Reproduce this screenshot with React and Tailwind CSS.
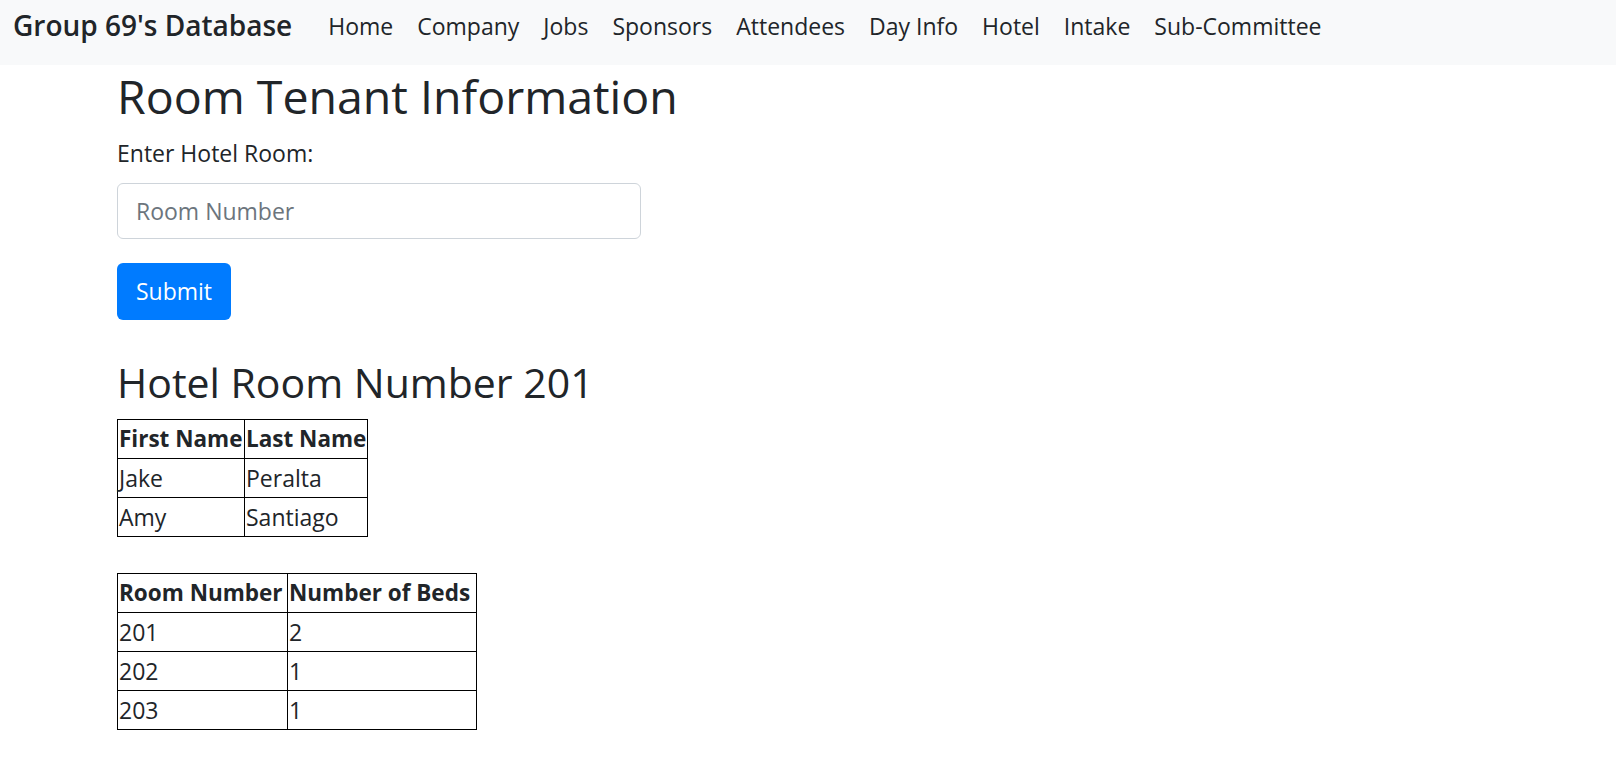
import React, { useState } from "react";

const links = [
  "Home",
  "Company",
  "Jobs",
  "Sponsors",
  "Attendees",
  "Day Info",
  "Hotel",
  "Intake",
  "Sub-Committee",
];

const tenants = [
  { first: "Jake", last: "Peralta" },
  { first: "Amy", last: "Santiago" },
];

const rooms = [
  { number: "201", beds: "2" },
  { number: "202", beds: "1" },
  { number: "203", beds: "1" },
];

const App = () => {
  const [room, setRoom] = useState("");

  const cell = "border border-black p-[1px] text-left align-top whitespace-nowrap";
  const head = cell + " font-bold text-[22.5px]";

  return (
    <div
      className="min-h-screen bg-white text-[#212529]"
      style={{ fontFamily: '"Open Sans", "Noto Sans", sans-serif' }}
    >
      <nav className="h-[65px] bg-[#f8f9fa] flex items-center pl-[13px] pb-[14px]">
        <a href="#" className="text-[28px] leading-[45px] font-semibold mr-[24px] text-[#212529]">
          Group 69's Database
        </a>
        {links.map((l) => (
          <a key={l} href="#" className="px-[12px] text-[23px] leading-[36px] text-[#212529]">
            {l}
          </a>
        ))}
      </nav>

      <div className="pl-[117px] text-[23px] leading-[36px]">
        <h2 className="text-[46.5px] leading-[1.2] font-normal mb-[10px] pt-[4px]">
          Room Tenant Information
        </h2>
        <form onSubmit={(e) => e.preventDefault()}>
          <label className="block mb-[12px]">Enter Hotel Room:</label>
          <input
            value={room}
            onChange={(e) => setRoom(e.target.value)}
            placeholder="Room Number"
            className="block w-[524px] h-[56px] border border-[#ced4da] rounded-[6px] px-[18px] text-[23px] placeholder:text-[#6c757d] outline-none"
          />
          <button className="mt-[24px] h-[57px] w-[114px] bg-[#007bff] text-white rounded-[6px] text-[23px]">
            Submit
          </button>
        </form>

        <h3 className="mt-[38px] text-[41px] leading-[1.2] font-normal mb-[12px]">
          Hotel Room Number 201
        </h3>
        <table className="border-collapse table-fixed w-[250px]">
          <colgroup>
            <col className="w-[127px]" />
            <col className="w-[123px]" />
          </colgroup>
          <thead>
            <tr>
              <th className={head}>First Name</th>
              <th className={head}>Last Name</th>
            </tr>
          </thead>
          <tbody>
            {tenants.map((t) => (
              <tr key={t.first}>
                <td className={cell}>{t.first}</td>
                <td className={cell}>{t.last}</td>
              </tr>
            ))}
          </tbody>
        </table>

        <table className="border-collapse table-fixed w-[359px] mt-[36px]">
          <colgroup>
            <col className="w-[170px]" />
            <col className="w-[189px]" />
          </colgroup>
          <thead>
            <tr>
              <th className={head}>Room Number</th>
              <th className={head}>Number of Beds</th>
            </tr>
          </thead>
          <tbody>
            {rooms.map((r) => (
              <tr key={r.number}>
                <td className={cell}>{r.number}</td>
                <td className={cell}>{r.beds}</td>
              </tr>
            ))}
          </tbody>
        </table>
      </div>
    </div>
  );
};

export default App;
